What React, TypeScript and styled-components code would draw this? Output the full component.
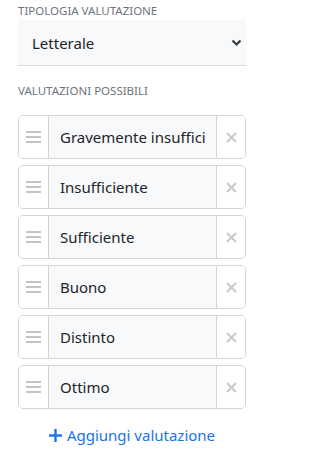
import React from "react"
import styled, { createGlobalStyle } from "styled-components"

const GlobalStyle = createGlobalStyle`
  body {
    margin: 0;
    background: #fff;
    font-family: "Noto Sans", "Open Sans", sans-serif;
  }
`

const Panel = styled.div`
  width: 228px;
  padding: 4px 16px 0 18px;
  display: flex;
  flex-direction: column;
`

const Label = styled.div<{ spaced?: boolean }>`
  font-size: 11.5px;
  line-height: 14px;
  color: #6c757d;
  text-transform: uppercase;
  margin-top: ${({ spaced }) => (spaced ? "18px" : "0")};
`

const Select = styled.div`
  margin-top: 2px;
  height: 46px;
  box-sizing: border-box;
  background: #f8f9fa;
  border-bottom: 1px solid #d8d8e4;
  display: flex;
  align-items: center;
  justify-content: space-between;
  padding: 0 4px 0 14px;
  font-size: 15px;
  color: #212529;
`

const List = styled.div`
  margin-top: 17px;
  display: flex;
  flex-direction: column;
  gap: 6px;
`

const Row = styled.div`
  height: 44px;
  box-sizing: border-box;
  border: 1px solid #d4d4d4;
  border-radius: 5px;
  display: flex;
  overflow: hidden;
`

const Handle = styled.div`
  width: 29px;
  border-right: 1px solid #d4d4d4;
  display: flex;
  align-items: center;
  justify-content: center;
  background: #fff;
`

const Value = styled.div`
  flex: 1;
  min-width: 0;
  background: #f8f9fa;
  display: flex;
  align-items: center;
  padding: 0 10px 0 11px;
  font-size: 15px;
  color: #212529;
  white-space: nowrap;
  overflow: hidden;
  border-right: 1px solid #d4d4d4;
`

const ValueText = styled.span`
  overflow: hidden;
`

const Remove = styled.div`
  width: 28px;
  display: flex;
  align-items: center;
  justify-content: center;
  background: #fff;
`

const AddLink = styled.div`
  margin-top: 16px;
  display: flex;
  align-items: center;
  justify-content: center;
  gap: 5px;
  color: #1b73e8;
  font-size: 15px;
`

const Bars = () => (
  <svg width="15" height="12" viewBox="0 0 15 12">
    <g stroke="#c4c4c4" strokeWidth="2">
      <line x1="0" y1="1" x2="15" y2="1" />
      <line x1="0" y1="6" x2="15" y2="6" />
      <line x1="0" y1="11" x2="15" y2="11" />
    </g>
  </svg>
)

const Cross = () => (
  <svg width="11" height="11" viewBox="0 0 11 11">
    <g stroke="#c8c8c8" strokeWidth="2">
      <line x1="1" y1="1" x2="10" y2="10" />
      <line x1="10" y1="1" x2="1" y2="10" />
    </g>
  </svg>
)

const Chevron = () => (
  <svg width="11" height="8" viewBox="0 0 11 8">
    <path d="M1.5 1.5 L5.5 5.5 L9.5 1.5" fill="none" stroke="#343a40" strokeWidth="2.2" />
  </svg>
)

const Plus = () => (
  <svg width="13" height="13" viewBox="0 0 13 13">
    <g stroke="#1b73e8" strokeWidth="2.4">
      <line x1="6.5" y1="0" x2="6.5" y2="13" />
      <line x1="0" y1="6.5" x2="13" y2="6.5" />
    </g>
  </svg>
)

const grades = [
  "Gravemente insufficiente",
  "Insufficiente",
  "Sufficiente",
  "Buono",
  "Distinto",
  "Ottimo",
]

export default function App() {
  return (
    <>
      <GlobalStyle />
      <Panel>
        <Label>Tipologia valutazione</Label>
        <Select>
          <span>Letterale</span>
          <Chevron />
        </Select>
        <Label spaced>Valutazioni possibili</Label>
        <List>
          {grades.map(g => (
            <Row key={g}>
              <Handle>
                <Bars />
              </Handle>
              <Value>
                <ValueText>{g}</ValueText>
              </Value>
              <Remove>
                <Cross />
              </Remove>
            </Row>
          ))}
        </List>
        <AddLink>
          <Plus />
          <span>Aggiungi valutazione</span>
        </AddLink>
      </Panel>
    </>
  )
}
